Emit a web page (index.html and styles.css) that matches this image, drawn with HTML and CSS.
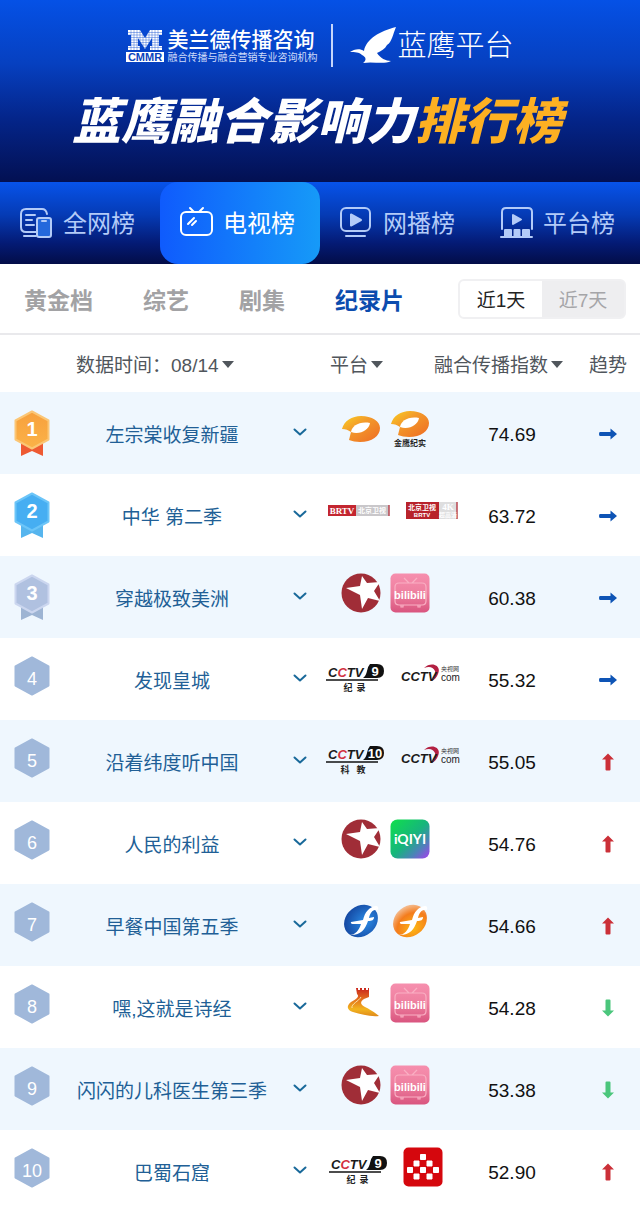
FILE: index.html
```html
<!DOCTYPE html>
<html lang="zh-CN">

<head>
    <meta charset="UTF-8">
    <meta name="viewport" content="width=device-width, initial-scale=1.0">
    <title>蓝鹰融合影响力排行榜</title>
    <link rel="stylesheet" href="styles.css">
</head>

<body>
    <!-- shared icons -->
    <svg class="sprite" width="0" height="0" aria-hidden="true">
        <defs>
            <linearGradient id="g-mango" x1="0" y1="0" x2="1" y2="1">
                <stop offset="0" stop-color="#f9d022" />
                <stop offset="0.4" stop-color="#f39a2a" />
                <stop offset="1" stop-color="#ee6b24" />
            </linearGradient>
            <linearGradient id="g-bili" x1="0" y1="0" x2="0" y2="1">
                <stop offset="0" stop-color="#f68fae" />
                <stop offset="0.5" stop-color="#ee7f9f" />
                <stop offset="1" stop-color="#d9557f" />
            </linearGradient>
            <linearGradient id="g-iqiyi" x1="0" y1="0" x2="1" y2="1">
                <stop offset="0" stop-color="#10e04a" />
                <stop offset="0.5" stop-color="#16b57c" />
                <stop offset="0.75" stop-color="#4b83b8" />
                <stop offset="1" stop-color="#a93df0" />
            </linearGradient>
            <radialGradient id="g-blue" cx="0.6" cy="0.6" r="0.7">
                <stop offset="0" stop-color="#2b8ce6" />
                <stop offset="1" stop-color="#12429c" />
            </radialGradient>
            <radialGradient id="g-orange" cx="0.45" cy="0.75" r="0.8">
                <stop offset="0" stop-color="#fdb813" />
                <stop offset="0.6" stop-color="#f47c1c" />
                <stop offset="1" stop-color="#f4c9a8" />
            </radialGradient>
            <linearGradient id="g-wall" x1="0" y1="0" x2="0" y2="1">
                <stop offset="0" stop-color="#c9231c" />
                <stop offset="0.4" stop-color="#e3701d" />
                <stop offset="0.75" stop-color="#f2b51f" />
                <stop offset="1" stop-color="#e08a1c" />
            </linearGradient>
            <linearGradient id="g-gold" x1="0" y1="0" x2="0" y2="1">
                <stop offset="0" stop-color="#f7a03c" />
                <stop offset="1" stop-color="#fbb248" />
            </linearGradient>
        </defs>

        <symbol id="mango" viewBox="0 0 38 28">
            <path fill="url(#g-mango)" d="M0 14C2 6 10 1 19 1c11 0 19 5 19 12 0 8-8 14-20 14-4 0-8-1-11-2l2-8C6 15 4 14 0 14z" />
            <path fill="#fff" d="M9 17C10 11 17 6 28 8 27 15 18 20 9 17z" />
        </symbol>
        <symbol id="star" viewBox="0 0 40 40">
            <circle cx="20" cy="20" r="19.500" fill="#a02d37" />
            <path fill="#fff" d="M21 3 26 10 39 9 33 18 39 28 27 25 21 36 19 22 5 15 19 13z" />
        </symbol>
        <symbol id="bilibili" viewBox="0 0 40 40">
            <rect x="0.500" y="0.500" width="39" height="39" rx="5" fill="url(#g-bili)" />
            <path d="M14 5l5 5M27 5l-5 5M9 10h23q4 0 4 4v14q0 4-4 4H9q-4 0-4-4V14q0-4 4-4zM11 32v2h2v-2M28 32v2h2v-2" fill="none" stroke="#f9afc3" stroke-width="1.200" />
        </symbol>
        <symbol id="channel" viewBox="0 0 58 36">
            <path d="M44 7h7q7 0 7 7t-7 7H37q3-2 4-7 1-5 3-7z" fill="#111" />
            <path d="M0 23h52" stroke="#111" stroke-width="1.300" />
        </symbol>
        <symbol id="swoosh" viewBox="0 0 60 24">
            <path d="M24 5C31-2 42 2 38 11q-2 5-6 7 4-6 3-10-3-6-11-3z" fill="#b32042" />
        </symbol>
        <symbol id="fujian" viewBox="0 0 40 40">
            <path fill="#fff" d="M8 34C15 34 18 29 20 23h-7q-4 0-3-2l12-2c2-8 6-13 13-14q3 0 2 4c-6-1-8 4-9 8l5-1c0 3-2 4-6 4-3 9-8 15-19 14z" />
        </symbol>
        <symbol id="hexagon" viewBox="0 0 36 40">
            <path d="M18 1.500 34.500 10.500V29.500L18 38.500 1.500 29.500V10.500z" stroke-width="2" stroke-linejoin="round" />
        </symbol>
        <symbol id="chevron" viewBox="0 0 14 8">
            <path d="M1.500 1.500 7 6.500 12.500 1.500" fill="none" stroke="#19699a" stroke-width="2" stroke-linecap="round" stroke-linejoin="round" />
        </symbol>
        <symbol id="arrow" viewBox="0 0 18 12">
            <path d="M1 4h10.500V0.500L18 6l-6.500 5.500V8H1Q0 8 0 6t1-2z" fill="currentColor" />
        </symbol>
        <symbol id="arrow-up" viewBox="0 0 12 18">
            <path d="M6 0.500l6 6H8.500v10q0 1-1 1h-3q-1 0-1-1v-10H0z" fill="currentColor" />
        </symbol>
    </svg>

    <header class="banner">
        <div class="brands">
            <div class="brand">
                <svg class="cmmr" viewBox="0 0 38 34" width="38" height="34" role="img" aria-label="CMMR">
                    <path fill="#fff" d="M2 1h12l5 8 5-8h12v5h-3v11h3v4H24v-4h2V9l-7 11-7-11v8h2v4H2v-4h3V6H2z" />
                    <path stroke="#0a4ad0" stroke-width="0.400" d="M2 3.500h34M2 6h34M2 8.500h34M2 11h34M2 13.500h34M2 16h34M2 18.500h34M5 1v20M8 1v20M11 1v20M14 1v20M17 1v20M20 1v20M23 1v20M26 1v20M29 1v20M32 1v20" />
                    <rect y="23" width="38" height="10" fill="#fff" />
                    <text x="19" y="32" class="cmmr-text">CMMR</text>
                </svg>
                <div>
                    <div class="brand-name">美兰德传播咨询</div>
                    <div class="brand-slogan">融合传播与融合营销专业咨询机构</div>
                </div>
            </div>
            <div class="brand eagle">
                <svg viewBox="0 0 48 38" width="48" height="38" aria-hidden="true">
                    <path fill="#fff" d="M1 25C5 22 11 21 15 24 17 12 31 4 47 0 44 7 43 15 38 18 36 22 32 24 28 26 31 31 37 34 42 34 34 38 25 34 14 36 18 33 17 30 13 28 10 25 6 25 1 25z" />
                </svg>
                <span>蓝鹰平台</span>
            </div>
        </div>
        <h1>蓝鹰融合影响力<em>排行榜</em></h1>
    </header>

    <nav class="boards">
        <a href="#all">
            <svg viewBox="0 0 34 34" width="34" height="34">
                <path d="M17 27H7q-5 0-5-5V9q0-5 5-5h16q4 0 5 5M7 10h9M7 15h6M7 20h8M5 31h12" />
                <rect x="18" y="13" width="14" height="19" rx="2" fill="#2468dc" />
                <path d="M23 16h4" />
            </svg>
            全网榜
        </a>
        <a href="#tv" class="active" aria-current="page">
            <svg viewBox="0 0 34 34" width="34" height="34">
                <rect x="2" y="7" width="31" height="23" rx="5" />
                <path d="M11 3l4 4M24 3l-4 4M9 19l6-6M13 20l4-4" />
            </svg>
            电视榜
        </a>
        <a href="#web">
            <svg viewBox="0 0 34 34" width="34" height="34">
                <rect x="2" y="3" width="29" height="23" rx="5" />
                <path d="M12 9.500v11l10-5.500z" fill="currentColor" />
                <path d="M7 31h19" />
            </svg>
            网播榜
        </a>
        <a href="#platform">
            <svg viewBox="0 0 34 34" width="34" height="34">
                <path d="M3 24V7q0-4 4-4h22q4 0 4 4v17" />
                <path d="M14 10v9l8-4.500z" fill="currentColor" />
                <path d="M6 25h6v6H6zM15.500 25h5v6h-5zM24 25h6v6h-6zM2 32h31" fill="currentColor" />
            </svg>
            平台榜
        </a>
    </nav>

    <div class="filters">
        <div class="genres">
            <a href="#prime">黄金档</a>
            <a href="#variety">综艺</a>
            <a href="#drama">剧集</a>
            <a href="#documentary" class="active">纪录片</a>
        </div>
        <div class="range">
            <button type="button" class="active">近1天</button>
            <button type="button">近7天</button>
        </div>
    </div>

    <table class="ranking">
        <colgroup>
            <col class="col-rank">
            <col class="col-name">
            <col class="col-more">
            <col class="col-platform">
            <col class="col-gap">
            <col class="col-index">
            <col class="col-trend">
        </colgroup>
        <thead>
            <tr>
                <th colspan="3" class="th-date"><button type="button">数据时间：08/14<i class="caret"></i></button></th>
                <th class="th-platform"><button type="button">平台<i class="caret"></i></button></th>
                <th colspan="2" class="th-index"><button type="button">融合传播指数<i class="caret"></i></button></th>
                <th class="trend">趋势</th>
            </tr>
        </thead>
        <tbody>
            <tr>
                <td class="rank">
                    <svg viewBox="0 0 36 48" width="36" height="48" role="img" aria-label="1">
                        <path d="M7 30v16l11-5 11 5V30z" fill="#ee5a33" />
                        <use href="#hexagon" width="36" height="40" fill="url(#g-gold)" stroke="#fbc675" />
                        <text x="18" y="26" class="medal-text">1</text>
                    </svg>
                </td>
                <td class="name">左宗棠收复新疆</td>
                <td class="more"><button type="button" aria-label="展开"><svg width="14" height="8"><use href="#chevron" /></svg></button></td>
                <td colspan="2">
                    <div class="logos">
                        <svg width="40" height="28"><use href="#mango" /></svg>
                        <svg viewBox="0 0 40 38" width="40" height="38">
                            <use href="#mango" width="40" height="28" />
                            <text x="20" y="36" class="jinying-text">金鹰纪实</text>
                        </svg>
                    </div>
                </td>
                <td class="index">74.69</td>
                <td class="trend flat"><svg width="18" height="12"><use href="#arrow" /></svg></td>
            </tr>
            <tr>
                <td class="rank">
                    <svg viewBox="0 0 36 48" width="36" height="48" role="img" aria-label="2">
                        <path d="M7 30v16l11-5 11 5V30z" fill="#56b5ee" />
                        <use href="#hexagon" width="36" height="40" fill="#46aef2" stroke="#6cc5f8" />
                        <text x="18" y="26" class="medal-text">2</text>
                    </svg>
                </td>
                <td class="name">中华 第二季</td>
                <td class="more"><button type="button" aria-label="展开"><svg width="14" height="8"><use href="#chevron" /></svg></button></td>
                <td colspan="2">
                    <div class="logos wide">
                        <svg viewBox="0 0 62 12" width="62" height="12">
                            <rect width="28" height="11" fill="#c32630" />
                            <rect x="28" width="33" height="11" fill="#c9c7ca" />
                            <path d="M61 0v11" stroke="#b84650" stroke-width="1.500" />
                            <text x="14" y="9" class="brtv-text">BRTV</text>
                            <text x="44" y="8" class="brtv-cn">北京卫视</text>
                        </svg>
                        <svg viewBox="0 0 52 18" width="52" height="18">
                            <rect width="33" height="17" fill="#b8232b" />
                            <rect x="33" width="18" height="17" fill="#dededf" />
                            <path d="M51 0v17" stroke="#b84650" stroke-width="1.500" />
                            <text x="16" y="8" class="brtv-cn">北京卫视</text>
                            <text x="16" y="15" class="brtv-small">BRTV</text>
                            <text x="42" y="8" class="brtv-text">4K</text>
                            <text x="42" y="15" class="brtv-small">超高清</text>
                        </svg>
                    </div>
                </td>
                <td class="index">63.72</td>
                <td class="trend flat"><svg width="18" height="12"><use href="#arrow" /></svg></td>
            </tr>
            <tr>
                <td class="rank">
                    <svg viewBox="0 0 36 48" width="36" height="48" role="img" aria-label="3">
                        <path d="M7 30v16l11-5 11 5V30z" fill="#9db4d3" />
                        <use href="#hexagon" width="36" height="40" fill="#b0c1e0" stroke="#cbd6ef" />
                        <text x="18" y="26" class="medal-text">3</text>
                    </svg>
                </td>
                <td class="name">穿越极致美洲</td>
                <td class="more"><button type="button" aria-label="展开"><svg width="14" height="8"><use href="#chevron" /></svg></button></td>
                <td colspan="2">
                    <div class="logos">
                        <svg width="40" height="40"><use href="#star" /></svg>
                        <svg viewBox="0 0 40 40" width="40" height="40">
                            <use href="#bilibili" />
                            <text x="20" y="26" class="bili-text">bilibili</text>
                        </svg>
                    </div>
                </td>
                <td class="index">60.38</td>
                <td class="trend flat"><svg width="18" height="12"><use href="#arrow" /></svg></td>
            </tr>
            <tr>
                <td class="rank">
                    <svg viewBox="0 0 36 40" width="36" height="40" role="img" aria-label="4">
                        <use href="#hexagon" fill="#a0b8da" stroke="#a0b8da" />
                        <text x="18" y="29" class="rank-text">4</text>
                    </svg>
                </td>
                <td class="name">发现皇城</td>
                <td class="more"><button type="button" aria-label="展开"><svg width="14" height="8"><use href="#chevron" /></svg></button></td>
                <td colspan="2">
                    <div class="logos wide">
                        <svg viewBox="0 0 58 36" width="58" height="36">
                            <use href="#channel" />
                            <text x="2" y="20" class="cctv-text">C<tspan class="red">C</tspan>TV</text>
                            <text x="49" y="19" class="channel-text">9</text>
                            <text x="22" y="34" class="channel-cn">纪</text>
                            <text x="35" y="34" class="channel-cn">录</text>
                        </svg>
                        <svg viewBox="0 0 60 24" width="60" height="24">
                            <use href="#swoosh" />
                            <text x="1" y="18" class="cctv-text">CCTV</text>
                            <text x="41" y="8" class="cn-text">央视网</text>
                            <text x="41" y="18" class="com-text">com</text>
                        </svg>
                    </div>
                </td>
                <td class="index">55.32</td>
                <td class="trend flat"><svg width="18" height="12"><use href="#arrow" /></svg></td>
            </tr>
            <tr>
                <td class="rank">
                    <svg viewBox="0 0 36 40" width="36" height="40" role="img" aria-label="5">
                        <use href="#hexagon" fill="#a0b8da" stroke="#a0b8da" />
                        <text x="18" y="29" class="rank-text">5</text>
                    </svg>
                </td>
                <td class="name">沿着纬度听中国</td>
                <td class="more"><button type="button" aria-label="展开"><svg width="14" height="8"><use href="#chevron" /></svg></button></td>
                <td colspan="2">
                    <div class="logos wide">
                        <svg viewBox="0 0 58 36" width="58" height="36">
                            <use href="#channel" />
                            <text x="2" y="20" class="cctv-text">C<tspan class="red">C</tspan>TV</text>
                            <text x="49" y="19" class="channel-text">10</text>
                            <text x="19" y="34" class="channel-cn">科</text>
                            <text x="35" y="34" class="channel-cn">教</text>
                        </svg>
                        <svg viewBox="0 0 60 24" width="60" height="24">
                            <use href="#swoosh" />
                            <text x="1" y="18" class="cctv-text">CCTV</text>
                            <text x="41" y="8" class="cn-text">央视网</text>
                            <text x="41" y="18" class="com-text">com</text>
                        </svg>
                    </div>
                </td>
                <td class="index">55.05</td>
                <td class="trend up"><svg width="12" height="18"><use href="#arrow-up" /></svg></td>
            </tr>
            <tr>
                <td class="rank">
                    <svg viewBox="0 0 36 40" width="36" height="40" role="img" aria-label="6">
                        <use href="#hexagon" fill="#a0b8da" stroke="#a0b8da" />
                        <text x="18" y="29" class="rank-text">6</text>
                    </svg>
                </td>
                <td class="name">人民的利益</td>
                <td class="more"><button type="button" aria-label="展开"><svg width="14" height="8"><use href="#chevron" /></svg></button></td>
                <td colspan="2">
                    <div class="logos">
                        <svg width="40" height="40"><use href="#star" /></svg>
                        <svg viewBox="0 0 40 40" width="40" height="40">
                            <rect x="0.500" y="0.500" width="39" height="39" rx="7" fill="url(#g-iqiyi)" />
                            <text x="20" y="25" class="iqiyi-text">iQIYI</text>
                        </svg>
                    </div>
                </td>
                <td class="index">54.76</td>
                <td class="trend up"><svg width="12" height="18"><use href="#arrow-up" /></svg></td>
            </tr>
            <tr>
                <td class="rank">
                    <svg viewBox="0 0 36 40" width="36" height="40" role="img" aria-label="7">
                        <use href="#hexagon" fill="#a0b8da" stroke="#a0b8da" />
                        <text x="18" y="29" class="rank-text">7</text>
                    </svg>
                </td>
                <td class="name">早餐中国第五季</td>
                <td class="more"><button type="button" aria-label="展开"><svg width="14" height="8"><use href="#chevron" /></svg></button></td>
                <td colspan="2">
                    <div class="logos">
                        <svg viewBox="0 0 40 40" width="40" height="40">
                            <ellipse cx="20" cy="20" rx="18" ry="15" transform="rotate(-38 20 20)" fill="url(#g-blue)" />
                            <use href="#fujian" />
                        </svg>
                        <svg viewBox="0 0 40 40" width="40" height="40">
                            <ellipse cx="20" cy="20" rx="18" ry="15" transform="rotate(-38 20 20)" fill="url(#g-orange)" />
                            <use href="#fujian" />
                        </svg>
                    </div>
                </td>
                <td class="index">54.66</td>
                <td class="trend up"><svg width="12" height="18"><use href="#arrow-up" /></svg></td>
            </tr>
            <tr>
                <td class="rank">
                    <svg viewBox="0 0 36 40" width="36" height="40" role="img" aria-label="8">
                        <use href="#hexagon" fill="#a0b8da" stroke="#a0b8da" />
                        <text x="18" y="29" class="rank-text">8</text>
                    </svg>
                </td>
                <td class="name">嘿,这就是诗经</td>
                <td class="more"><button type="button" aria-label="展开"><svg width="14" height="8"><use href="#chevron" /></svg></button></td>
                <td colspan="2">
                    <div class="logos">
                        <svg viewBox="0 0 40 40" width="40" height="40">
                            <path fill="url(#g-wall)" d="M15 5h2v2h2V5h2v2h2V5h2v2h2V5h1v9l-5 2c-4 3-4 5 1 8 4 2 8 4 14 9-9 1-18-2-26-4-6-2-7-6-2-10 5-3 9-5 6-8z" />
                            <path fill="none" stroke="#fbe3a8" stroke-width="1" d="M20 14c-2 4-10 7-9 11" />
                        </svg>
                        <svg viewBox="0 0 40 40" width="40" height="40">
                            <use href="#bilibili" />
                            <text x="20" y="26" class="bili-text">bilibili</text>
                        </svg>
                    </div>
                </td>
                <td class="index">54.28</td>
                <td class="trend down"><svg width="12" height="18"><use href="#arrow-up" /></svg></td>
            </tr>
            <tr>
                <td class="rank">
                    <svg viewBox="0 0 36 40" width="36" height="40" role="img" aria-label="9">
                        <use href="#hexagon" fill="#a0b8da" stroke="#a0b8da" />
                        <text x="18" y="29" class="rank-text">9</text>
                    </svg>
                </td>
                <td class="name">闪闪的儿科医生第三季</td>
                <td class="more"><button type="button" aria-label="展开"><svg width="14" height="8"><use href="#chevron" /></svg></button></td>
                <td colspan="2">
                    <div class="logos">
                        <svg width="40" height="40"><use href="#star" /></svg>
                        <svg viewBox="0 0 40 40" width="40" height="40">
                            <use href="#bilibili" />
                            <text x="20" y="26" class="bili-text">bilibili</text>
                        </svg>
                    </div>
                </td>
                <td class="index">53.38</td>
                <td class="trend down"><svg width="12" height="18"><use href="#arrow-up" /></svg></td>
            </tr>
            <tr>
                <td class="rank">
                    <svg viewBox="0 0 36 40" width="36" height="40" role="img" aria-label="10">
                        <use href="#hexagon" fill="#a0b8da" stroke="#a0b8da" />
                        <text x="18" y="29" class="rank-text">10</text>
                    </svg>
                </td>
                <td class="name">巴蜀石窟</td>
                <td class="more"><button type="button" aria-label="展开"><svg width="14" height="8"><use href="#chevron" /></svg></button></td>
                <td colspan="2">
                    <div class="logos spaced">
                        <svg viewBox="0 0 58 36" width="58" height="36">
                            <use href="#channel" />
                            <text x="2" y="20" class="cctv-text">C<tspan class="red">C</tspan>TV</text>
                            <text x="49" y="19" class="channel-text">9</text>
                            <text x="22" y="34" class="channel-cn">纪</text>
                            <text x="35" y="34" class="channel-cn">录</text>
                        </svg>
                        <svg viewBox="0 0 40 40" width="40" height="40">
                            <rect x="0.500" y="0.500" width="39" height="39" rx="5" fill="#d5070d" />
                            <path fill="#fff" stroke="#fff" stroke-linejoin="round" d="M17.500 7.500h5v5h-5zM11 14h5v5h-5zM24 14h5v5h-5zM4.500 20.500h5v5h-5zM17.500 20.500h5v5h-5zM30.500 20.500h5v5h-5zM11 27h5v5h-5zM24 27h5v5h-5z" />
                        </svg>
                    </div>
                </td>
                <td class="index">52.90</td>
                <td class="trend up"><svg width="12" height="18"><use href="#arrow-up" /></svg></td>
            </tr>
        </tbody>
    </table>
</body>

</html>
```

FILE: styles.css
```css
* {
    box-sizing: border-box;
}

body {
    margin: 0;
    background-color: #fff;
    font-family: "Liberation Sans", "Noto Sans CJK SC", sans-serif;
    font-size: 19px;
    color: #111;
}

a {
    color: inherit;
    text-decoration: none;
}

button {
    font: inherit;
    color: inherit;
    background: none;
    border: none;
    padding: 0;
    cursor: pointer;
}

.sprite {
    position: absolute;
}

/* header */
.banner {
    height: 182px;
    padding-top: 24px;
    color: #fff;
    background: linear-gradient(#0551e6 0%, #0640c0 35%, #04258a 65%, #031052 100%);
}

.brands {
    display: flex;
    justify-content: center;
    height: 43px;
}

.brand {
    display: flex;
    align-items: center;
    gap: 3px;
    padding-right: 14px;
}

.brand-name {
    font-size: 21px;
    font-weight: 500;
    line-height: 24px;
}

.brand-slogan {
    font-size: 10px;
    line-height: 12px;
    color: #cfdcfa;
}

.eagle {
    border-left: 2px solid #c6d6fb;
    padding: 0 0 0 16px;
    gap: 0;
    font-size: 29px;
    font-weight: 300;
    line-height: 40px;
}

.banner h1 {
    margin: 19px 0 0;
    padding-right: 6px;
    text-align: center;
    font-family: "Noto Sans CJK SC", sans-serif;
    font-size: 49px;
    font-weight: 900;
    font-style: italic;
    line-height: 64px;
    white-space: nowrap;
}

.banner h1 em {
    color: #fdb022;
}

/* board tabs */
.boards {
    display: flex;
    height: 82px;
    background: linear-gradient(#0753ea 0%, #053bb5 40%, #041a74 75%, #030d48 100%);
    color: #b3cbf8;
    font-family: "Noto Sans CJK SC", sans-serif;
    font-size: 24px;
    line-height: 34px;
}

.boards a {
    flex: 1;
    display: flex;
    align-items: center;
    justify-content: center;
    gap: 10px;
    padding: 0 6px 3px 0;
}

.boards a.active {
    color: #fff;
    border-radius: 18px;
    background: linear-gradient(90deg, #0f5bfd, #169af8);
}

.boards svg {
    fill: none;
    stroke: currentColor;
    stroke-width: 2;
    stroke-linecap: round;
    stroke-linejoin: round;
}

/* genre tabs */
.filters {
    display: flex;
    align-items: center;
    justify-content: space-between;
    height: 71px;
    padding: 0 14px 0 24px;
    border-bottom: 2px solid #e9e9ec;
}

.genres {
    display: flex;
    gap: 50px;
    font-size: 23px;
    font-weight: 700;
    color: #a2a2a4;
}

.genres .active {
    color: #0c4cae;
}

.range {
    display: flex;
    width: 168px;
    height: 40px;
    border: 2px solid #f0f0f2;
    border-radius: 6px;
    background-color: #eeeef0;
    overflow: hidden;
}

.range button {
    flex: 1;
    color: #a5a5a8;
}

.range .active {
    color: #222;
    background-color: #fff;
}

/* ranking table */
.ranking {
    width: 100%;
    table-layout: fixed;
    border-collapse: collapse;
}

.col-rank {
    width: 64px;
}

.col-more {
    width: 40px;
}

.col-platform {
    width: 110px;
}

.col-gap {
    width: 32px;
}

.col-index {
    width: 100px;
}

.col-trend {
    width: 78px;
}

.ranking th {
    height: 57px;
    padding: 0;
    text-align: left;
    font-weight: 400;
    color: #50565c;
    white-space: nowrap;
}

.ranking .th-date {
    padding-left: 76px;
}

.ranking .th-platform {
    padding-left: 10px;
}

.ranking .th-index {
    padding-left: 4px;
}

.caret {
    display: inline-block;
    margin-left: 3px;
    vertical-align: 4px;
    border: 6px solid transparent;
    border-top: 7px solid #50565c;
    border-bottom: none;
}

.ranking td {
    height: 82px;
    padding: 0;
    vertical-align: top;
    text-align: center;
    line-height: 28px;
}

.ranking tr:last-child td {
    height: 77px;
}

.ranking tbody tr:nth-child(odd) {
    background-color: #eff7fe;
}

.ranking .rank {
    padding-top: 18px;
}

.ranking .name {
    padding-top: 30px;
    color: #215f96;
}

.ranking .more {
    padding-top: 26px;
}

.more button {
    width: 28px;
    height: 28px;
}

.more svg,
.rank svg {
    display: block;
    margin: 0 auto;
}

.ranking .index {
    padding-top: 29px;
}

.ranking .trend {
    padding-left: 14px;
    text-align: center;
}

.ranking td.trend {
    padding-top: 27px;
}

.trend svg {
    vertical-align: middle;
}

.flat {
    color: #0e54b5;
}

.up {
    color: #cb3038;
}

.down {
    color: #4bc67c;
}

.down svg {
    transform: rotate(180deg);
}

.logos {
    display: flex;
    align-items: center;
    justify-content: center;
    gap: 9px;
    height: 74px;
    padding-right: 10px;
}

.logos.spaced {
    gap: 16px;
}

.logos.wide {
    gap: 16px;
    padding: 0 0 0 4px;
}

/* text inside the logos */
svg {
    overflow: visible;
}

svg text {
    text-anchor: middle;
    fill: #fff;
}

svg .cmmr-text {
    font-size: 11px;
    font-weight: 700;
    fill: #0a43bd;
}

.medal-text {
    font-size: 20px;
    font-weight: 700;
}

.rank-text {
    font-size: 18px;
}

svg .jinying-text {
    font-size: 8px;
    font-weight: 700;
    fill: #222;
}

.bili-text {
    font-size: 11px;
    font-weight: 700;
}

.iqiyi-text {
    font-family: Lato, sans-serif;
    font-size: 14px;
    font-weight: 700;
}

svg .cctv-text {
    font-size: 13px;
    font-weight: 700;
    font-style: italic;
    text-anchor: start;
    fill: #1a1a1a;
}

.cctv-text .red {
    fill: #d22f3f;
}

svg .cn-text {
    font-size: 6px;
    text-anchor: start;
    fill: #333;
}

svg .com-text {
    font-size: 10px;
    text-anchor: start;
    fill: #222;
}

.channel-text {
    font-size: 13px;
    font-weight: 700;
}

svg .channel-cn {
    font-size: 9px;
    font-weight: 700;
    fill: #222;
}

.brtv-text {
    font-family: "Liberation Serif", serif;
    font-size: 9px;
    font-weight: 700;
}

.brtv-cn {
    font-size: 7px;
    font-weight: 700;
}

.brtv-small {
    font-size: 6px;
    font-weight: 700;
}
```
